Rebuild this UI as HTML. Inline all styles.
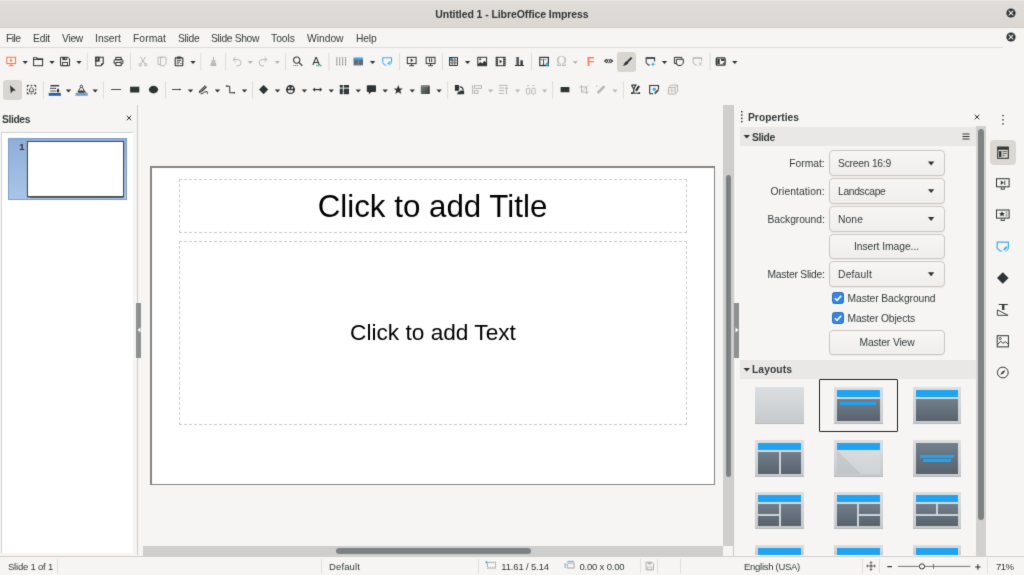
<!DOCTYPE html>
<html lang="en"><head><meta charset="utf-8"><title>Untitled 1 - LibreOffice Impress</title>
<style>
*{box-sizing:border-box;margin:0;padding:0}
html,body{width:1024px;height:575px;overflow:hidden;background:#f6f5f3}
body{position:relative;font-family:"Liberation Sans",sans-serif;font-size:10.4px;color:#353a3c;-webkit-font-smoothing:antialiased}
.a{position:absolute}
#root{position:absolute;left:0;top:0;width:1024px;height:575px;will-change:transform;background:#f6f5f3;filter:url(#soft)}
.t{position:absolute;white-space:nowrap;line-height:14px;height:14px}
.b{font-weight:bold}
#title{left:0;top:0;width:1024px;height:28px;background:linear-gradient(#ece9e6 0,#e0dcd9 1.5px,#dbd7d3 26px);border-bottom:1px solid #d0cbc6}
.sep{position:absolute;width:1px;background:#e1dfdc}
.ic{position:absolute;width:18px;height:18px;overflow:visible}
.dd{position:absolute;width:0;height:0;border-left:3.3px solid transparent;border-right:3.3px solid transparent;border-top:3.6px solid #2e3436;margin-left:-.3px}
.dd.g{border-top-color:#b9b7b4}
.combo,.btn{position:absolute;left:829px;width:116px;height:25.6px;border:1px solid #cdc7c2;border-radius:4px;background:linear-gradient(#f7f6f5,#efeeec);box-shadow:0 1px 1px rgba(0,0,0,.06)}
.lab{position:absolute;right:199px;text-align:right;white-space:nowrap;line-height:14px;height:14px}
.cb{position:absolute;left:832px;width:12px;height:12px;border-radius:2.5px;background:#3584e4;border:1px solid #2a6fc6}
.shdr{position:absolute;left:740px;width:236px;background:#e9e8e6}

.thumb{position:absolute;background:linear-gradient(#dcdfe1,#c6cacd);border-bottom:1px solid #b6babd}
.thumb .in{position:absolute;left:3px;right:3px;top:3px;bottom:3px;background:linear-gradient(#717f8d,#58626c)}
.thumb .bl{position:absolute;background:#1fa3f2}
.thumb .ln{position:absolute;background:#cdd1d4}
.thumb .bx{position:absolute;background:linear-gradient(#717f8d,#58626c)}
</style></head>
<body>
<svg width="0" height="0" style="position:absolute"><defs><filter id="soft" x="0" y="0" width="100%" height="100%" color-interpolation-filters="sRGB"><feConvolveMatrix order="3" kernelMatrix="0.011 0.084 0.011 0.084 0.62 0.084 0.011 0.084 0.011" divisor="1" edgeMode="duplicate" preserveAlpha="true"/></filter></defs></svg>
<div id="root">

<div id="title" class="a"></div>
<!-- window close buttons -->
<svg class="a" style="left:1004.6px;top:7.4px;width:12px;height:12px" viewBox="0 0 12 12"><circle cx="6" cy="6" r="4.6" fill="#2e3436"/><path d="M3.7 3.7l4.6 4.6M8.3 3.7l-4.6 4.6" stroke="#f2f0ee" stroke-width="1.1" fill="none"/></svg>
<svg class="a" style="left:1004.6px;top:31.4px;width:12px;height:12px" viewBox="0 0 12 12"><circle cx="6" cy="6" r="4.6" fill="#2e3436"/><path d="M3.7 3.7l4.6 4.6M8.3 3.7l-4.6 4.6" stroke="#f2f0ee" stroke-width="1.1" fill="none"/></svg>
<!-- menubar underline -->
<div class="a" style="left:0;top:47px;width:1003px;height:1px;background:#dfddda"></div>
<!-- pressed toolbar buttons -->
<div class="a" style="left:617.4px;top:51.6px;width:18.8px;height:20.3px;border-radius:3px;background:#d9d5d1"></div>
<div class="a" style="left:3.3px;top:80px;width:18.4px;height:20.2px;border-radius:3px;background:#d9d5d1"></div>

<!-- slide panel -->
<div class="a" style="left:1px;top:131.6px;width:132.2px;height:421px;background:#fff;border-top:1px solid #d4d2cf;border-left:1px solid #d4d2cf"></div>
<div class="a" style="left:8px;top:138px;width:119px;height:62px;background:linear-gradient(#8fadd6,#a9c5e8);border:1px solid #7f9fca"></div>
<div class="a" style="left:27px;top:141px;width:97px;height:56px;background:#fff;border:1px solid #4a4a4a;box-shadow:0 .5px 1px rgba(0,0,0,.5)"></div>
<svg class="a" style="left:124.6px;top:114.4px;width:8px;height:8px" viewBox="0 0 8 8"><path d="M1.7 1.7l4.6 4.6M6.3 1.7l-4.6 4.6" stroke="#2e3436" stroke-width="1" fill="none"/></svg>
<!-- splitter left -->
<div class="a" style="left:136.8px;top:105px;width:1.4px;height:449.5px;background:#cdcbc9"></div>
<div class="a" style="left:136.2px;top:303px;width:5px;height:54.6px;background:#8e9192"></div>
<svg class="a" style="left:137px;top:327px;width:4px;height:6px" viewBox="0 0 4 6"><path d="M3.5 0.5L0.5 3l3 2.5z" fill="#fff"/></svg>

<!-- editing view -->
<div class="a" style="left:150px;top:165.8px;width:565px;height:319.2px;background:#fff;border:1.5px solid #858585;border-top-width:2px;border-left-width:2px"></div>
<div class="a" style="left:179px;top:179.4px;width:507.6px;height:54px;border:1px dashed #cbcbcb"></div>
<div class="a" style="left:179px;top:240.6px;width:507.6px;height:184.6px;border:1px dashed #cbcbcb"></div>
<div class="a" style="left:178.5px;top:180px;width:508px;height:54px;line-height:54px;text-align:center;font-size:31.3px;color:#000;font-family:'Liberation Sans',sans-serif">Click to add Title</div>
<div class="a" style="left:179px;top:241px;width:508px;height:184px;line-height:183.4px;text-align:center;font-size:22.66px;color:#000;font-family:'Liberation Sans',sans-serif">Click to add Text</div>

<!-- h scrollbar -->
<div class="a" style="left:143px;top:546px;width:580px;height:10px;background:#cecece"></div>
<div class="a" style="left:336px;top:548px;width:195px;height:5.5px;border-radius:3px;background:#7e8282"></div>
<!-- v scrollbar -->
<div class="a" style="left:723px;top:105px;width:10.3px;height:441px;background:#cecece"></div>
<div class="a" style="left:725.5px;top:174.6px;width:5.6px;height:302.4px;border-radius:3px;background:#7e8282"></div>
<div class="a" style="left:733.2px;top:105px;width:1px;height:451px;background:#c9c9c9"></div>
<!-- sidebar splitter -->
<div class="a" style="left:734px;top:302.8px;width:5.3px;height:55px;background:#8e9192"></div>
<svg class="a" style="left:734.5px;top:327px;width:4px;height:6px" viewBox="0 0 4 6"><path d="M0.5 0.5L3.5 3l-3 2.5z" fill="#fff"/></svg>

<!-- sidebar -->
<div class="shdr" style="top:127px;height:19px"></div>
<div class="shdr" style="top:360px;height:19.3px"></div>
<svg class="a" style="left:740px;top:110px;width:4px;height:14px" viewBox="0 0 4 14"><g fill="#2e3436"><rect x="1" y="1" width="1.5" height="1.5"/><rect x="1" y="4.3" width="1.5" height="1.5"/><rect x="1" y="7.6" width="1.5" height="1.5"/><rect x="1" y="10.9" width="1.5" height="1.5"/></g></svg>
<svg class="a" style="left:972.5px;top:112.7px;width:8px;height:8px" viewBox="0 0 8 8"><path d="M1.7 1.7l4.6 4.6M6.3 1.7l-4.6 4.6" stroke="#2e3436" stroke-width="1" fill="none"/></svg>
<svg class="a" style="left:743px;top:134px;width:8px;height:6px" viewBox="0 0 8 6"><path d="M0.5 1h6.5L3.75 4.6z" fill="#2e3436"/></svg>
<svg class="a" style="left:743px;top:367px;width:8px;height:6px" viewBox="0 0 8 6"><path d="M0.5 1h6.5L3.75 4.6z" fill="#2e3436"/></svg>
<svg class="a" style="left:961px;top:132px;width:10px;height:9px" viewBox="0 0 10 9"><path d="M1.5 2h7M1.5 4.5h7M1.5 7h7" stroke="#2e3436" stroke-width="1" fill="none"/></svg>

<div class="combo" style="top:150.2px"></div>
<div class="combo" style="top:178.2px"></div>
<div class="combo" style="top:206px"></div>
<div class="btn" style="top:233.6px"></div>
<div class="combo" style="top:261.4px"></div>
<div class="btn" style="top:329.5px"></div>
<div class="cb" style="top:292.3px"></div>
<div class="cb" style="top:312.4px"></div>
<svg class="a" style="left:832px;top:292.3px;width:12px;height:12px" viewBox="0 0 12 12"><path d="M2.8 6.2l2.2 2.2 4.2-4.6" stroke="#fff" stroke-width="1.6" fill="none"/></svg>
<svg class="a" style="left:832px;top:312.4px;width:12px;height:12px" viewBox="0 0 12 12"><path d="M2.8 6.2l2.2 2.2 4.2-4.6" stroke="#fff" stroke-width="1.6" fill="none"/></svg>

<!-- layouts -->
<div class="a" style="left:818.9px;top:379.3px;width:78.8px;height:52.5px;border:1px solid #222;border-radius:1px"></div>
<div class="thumb" style="left:755.2px;top:387.2px;width:48.8px;height:37.2px;"></div>
<div class="thumb" style="left:833.9px;top:387.2px;width:48.8px;height:37.2px;"><div class="bx" style="left:3.1px;top:11.60px;width:42.599999999999994px;height:22.50px"></div><div class="bl" style="left:3.1px;top:3.1px;width:42.599999999999994px;height:6.6px"></div><div class="bl" style="left:6.2px;top:14.4px;width:36.40px;height:3.3px"></div></div>
<div class="thumb" style="left:912.6px;top:387.2px;width:48.8px;height:37.2px;"><div class="bx" style="left:3.1px;top:11.60px;width:42.599999999999994px;height:22.50px"></div><div class="bl" style="left:3.1px;top:3.1px;width:42.599999999999994px;height:6.6px"></div></div>
<div class="thumb" style="left:755.2px;top:440.3px;width:48.8px;height:37.2px;"><div class="bx" style="left:3.1px;top:11.60px;width:42.599999999999994px;height:22.50px"></div><div class="bl" style="left:3.1px;top:3.1px;width:42.599999999999994px;height:6.6px"></div><div class="ln" style="left:23.40px;top:11.60px;width:2px;height:22.50px"></div></div>
<div class="thumb" style="left:833.9px;top:440.3px;width:48.8px;height:37.2px;"><div class="bl" style="left:3.1px;top:3.1px;width:42.599999999999994px;height:6.6px"></div><div style="position:absolute;left:3.1px;top:9.7px;width:42.599999999999994px;height:24.40px;background:linear-gradient(#d9dcde,#cfd3d5)"><div style="position:absolute;left:0;top:0;width:100%;height:100%;background:linear-gradient(#c9cdd0,#c1c5c8);clip-path:polygon(0 0,24.40px 100%,0 100%)"></div></div></div>
<div class="thumb" style="left:912.6px;top:440.3px;width:48.8px;height:37.2px;"><div class="bx" style="left:3.1px;top:3.1px;width:42.599999999999994px;height:31.00px"></div><div class="bl" style="left:7px;top:14.3px;width:34.8px;height:3px"></div><div class="bl" style="left:10px;top:19.2px;width:28.8px;height:3px"></div></div>
<div class="thumb" style="left:755.2px;top:492.3px;width:48.8px;height:37.2px;"><div class="bx" style="left:3.1px;top:11.60px;width:42.599999999999994px;height:22.50px"></div><div class="bl" style="left:3.1px;top:3.1px;width:42.599999999999994px;height:6.6px"></div><div class="ln" style="left:23.40px;top:11.60px;width:2px;height:22.50px"></div><div class="ln" style="left:3.10px;top:21.85px;width:21.30px;height:1.9px"></div></div>
<div class="thumb" style="left:833.9px;top:492.3px;width:48.8px;height:37.2px;"><div class="bx" style="left:3.1px;top:11.60px;width:42.599999999999994px;height:22.50px"></div><div class="bl" style="left:3.1px;top:3.1px;width:42.599999999999994px;height:6.6px"></div><div class="ln" style="left:23.40px;top:11.60px;width:2px;height:22.50px"></div><div class="ln" style="left:24.40px;top:21.85px;width:21.30px;height:1.9px"></div></div>
<div class="thumb" style="left:912.6px;top:492.3px;width:48.8px;height:37.2px;"><div class="bx" style="left:3.1px;top:11.60px;width:42.599999999999994px;height:22.50px"></div><div class="bl" style="left:3.1px;top:3.1px;width:42.599999999999994px;height:6.6px"></div><div class="ln" style="left:23.40px;top:11.60px;width:2px;height:11.25px"></div><div class="ln" style="left:3.10px;top:21.85px;width:42.60px;height:1.9px"></div></div>
<div class="thumb" style="left:755.2px;top:545.2px;width:48.8px;height:9.6px;overflow:hidden;border-bottom:0;"><div class="bl" style="left:3.1px;top:3.1px;width:42.599999999999994px;height:6.6px"></div></div>
<div class="thumb" style="left:833.9px;top:545.2px;width:48.8px;height:9.6px;overflow:hidden;border-bottom:0;"><div class="bl" style="left:3.1px;top:3.1px;width:42.599999999999994px;height:6.6px"></div></div>
<div class="thumb" style="left:912.6px;top:545.2px;width:48.8px;height:9.6px;overflow:hidden;border-bottom:0;"><div class="bl" style="left:3.1px;top:3.1px;width:42.599999999999994px;height:6.6px"></div></div>

<!-- sidebar scrollbar -->
<div class="a" style="left:976px;top:126px;width:10.4px;height:430px;background:#d2d1cf"></div>
<div class="a" style="left:978.2px;top:129.3px;width:6px;height:391px;border-radius:3px;background:#7e8282"></div>
<!-- tabbar active -->
<div class="a" style="left:989.6px;top:140px;width:26.7px;height:25.3px;border-radius:4px;background:#dbd7d3"></div>

<!-- status bar -->
<div class="a" style="left:0;top:556px;width:1024px;height:1px;background:#d2d0cd"></div>
<div class="a" style="left:0;top:557px;width:1024px;height:18px;background:#f6f5f3"></div>
<div class="sep" style="left:57px;top:559px;height:14px"></div>
<div class="sep" style="left:321px;top:559px;height:14px"></div>
<div class="sep" style="left:478px;top:559px;height:14px"></div>
<div class="sep" style="left:640px;top:559px;height:14px"></div>
<div class="sep" style="left:657px;top:559px;height:14px"></div>
<div class="sep" style="left:680px;top:559px;height:14px"></div>
<div class="sep" style="left:862px;top:559px;height:14px"></div>
<div class="sep" style="left:879px;top:559px;height:14px"></div>
<div class="sep" style="left:987px;top:559px;height:14px"></div>
<!-- zoom slider -->
<svg class="a" style="left:884px;top:560px;width:100px;height:12px" viewBox="0 0 100 12"><path d="M3.3 6.6h4.7M91.2 7h5.4M93.9 4.3v5.4" stroke="#2e3436" stroke-width="1.1" fill="none"/><path d="M14 6.4h72.5" stroke="#555" stroke-width=".8"/><path d="M49.5 3.9v5" stroke="#555" stroke-width=".8"/><circle cx="38" cy="6.4" r="2.6" fill="#f6f5f3" stroke="#2e3436" stroke-width="1"/></svg>

<svg class="a" style="left:0;top:0;width:1024px;height:575px" viewBox="0 0 1024 575">
<g transform="translate(11.2 61.5)"><rect x="-4.4" y="-4.2" width="8.8" height="6.300000000000001" rx="0" fill="none" stroke="#f0763f" stroke-width="1.0"/><path d="M0,2.1V4M-2.4,4.2H2.4" fill="none" stroke="#f0763f" stroke-width="1.0" /><path d="M-1,-3.1L1.6,-1.2L-1,0.7Z" fill="#f0763f" /></g>
<path d="M22.5,61.1H27.9L25.2,64.1Z" fill="#2e3436"/>
<g transform="translate(38.1 61.5)"><rect x="-4.5" y="-2.4" width="9.0" height="6.6" rx="0" fill="none" stroke="#2e3436" stroke-width="1.0"/><path d="M-5,-1.4V-4.3H-1.2L0.2,-2.9H5V-1.4Z" fill="#2e3436" /><rect x="-4" y="-3.4" width="2.4" height="1.0" rx="0" fill="#f6f5f3"/></g>
<path d="M49.3,61.1H54.7L52,64.1Z" fill="#2e3436"/>
<g transform="translate(65 61.5)"><path d="M-4.5,-4.2H3L4.5,-2.7V4.2H-4.5Z" fill="none" stroke="#2e3436" stroke-width="1.0" /><rect x="-2.5" y="-4.2" width="4.8" height="2.8000000000000003" rx="0" fill="#2e3436"/><rect x="0.4" y="-3.7" width="0.9999999999999999" height="1.5" rx="0" fill="#f6f5f3"/><rect x="-2.5" y="1" width="5.0" height="3.2" rx="0" fill="none" stroke="#2e3436" stroke-width="0.9"/></g>
<path d="M76.3,61.1H81.7L79,64.1Z" fill="#2e3436"/>
<rect x="86.8" y="52.7" width="1" height="17.7" fill="#dedcd9"/>
<g transform="translate(99.5 61.5)"><path d="M-3.7,-4.2H3.7V2L1.5,4.2H-3.7Z" fill="none" stroke="#2e3436" stroke-width="1.1" /><rect x="-4.2" y="-4.7" width="4.4" height="4.8" rx="0" fill="#2e3436"/><path d="M3.9,2H1.5V4.4Z" fill="#2e3436" /><rect x="-2.7" y="-3.6" width="0.9000000000000001" height="2.2" rx="0" fill="#f6f5f3"/></g>
<g transform="translate(118.5 61.5)"><rect x="-4.4" y="-1.8" width="8.8" height="4.2" rx="0.8" fill="none" stroke="#2e3436" stroke-width="1.0"/><rect x="-2.6" y="-4.1" width="5.2" height="2.3" rx="0" fill="none" stroke="#2e3436" stroke-width="1.0"/><rect x="-2.6" y="0.9" width="5.2" height="3.1999999999999997" rx="0" fill="#f6f5f3" stroke="#2e3436" stroke-width="1.0"/><rect x="2.3" y="-0.9" width="1.0" height="0.8" rx="0" fill="#2e3436"/></g>
<rect x="130.0" y="52.7" width="1" height="17.7" fill="#dedcd9"/>
<g transform="translate(143 61.5)"><path d="M-2.6,-4.6L2,2.4M2.6,-4.6L-2,2.4" fill="none" stroke="#b9b7b4" stroke-width="1" /><circle cx="-2.8" cy="3.3" r="1.25" fill="none" stroke="#b9b7b4"/><circle cx="2.8" cy="3.3" r="1.25" fill="none" stroke="#b9b7b4"/></g>
<g transform="translate(162 61.5)"><path d="M-1.6,3H-4V-4.3H1.4" fill="none" stroke="#b9b7b4" stroke-width="1" /><path d="M-1.4,-4.3H4V2.3L2,4.3H-1.4Z" fill="none" stroke="#b9b7b4" stroke-width="1" /></g>
<g transform="translate(179 61.5)"><rect x="-3.8" y="-3.6" width="7.6" height="7.800000000000001" rx="0.5" fill="none" stroke="#2e3436" stroke-width="1.1"/><rect x="-2" y="-4.9" width="4" height="1.9000000000000004" rx="0.5" fill="#2e3436"/><path d="M-2.2,-1.2H2.2M-2.2,0.6H0.8M-2.2,2.3H-0.4" fill="none" stroke="#2e3436" stroke-width="0.9" /><path d="M2.4,1V2.6H0.8Z" fill="#2e3436" /></g>
<path d="M190.3,61.1H195.7L193,64.1Z" fill="#2e3436"/>
<rect x="200.3" y="52.7" width="1" height="17.7" fill="#dedcd9"/>
<g transform="translate(213.5 61.5)"><path d="M0,-4.6V-1" fill="none" stroke="#b9b7b4" stroke-width="1.1" /><path d="M-1.9,-1.2H1.9V0.4H-1.9Z M-2.1,0.8H2.1L2.9,4.5H-3.4Z" fill="#b9b7b4" /></g>
<rect x="225.1" y="52.7" width="1" height="17.7" fill="#dedcd9"/>
<g transform="translate(237 61.5)"><path d="M-3.6,-1.9H0.9A3.15,3.15 0 0 1 0.9,4.4H-0.8" fill="none" stroke="#b9b7b4" stroke-width="1" /><path d="M-1.3,-4.4L-3.9,-1.9L-1.3,0.6" fill="none" stroke="#b9b7b4" stroke-width="1" /></g>
<path d="M247.60000000000002,61.1H253.0L250.3,64.1Z" fill="#b9b7b4"/>
<g transform="translate(263.2 61.5)"><path d="M3.6,-1.9H-0.9A3.15,3.15 0 0 0 -0.9,4.4H0.8" fill="none" stroke="#b9b7b4" stroke-width="1" /><path d="M1.3,-4.4L3.9,-1.9L1.3,0.6" fill="none" stroke="#b9b7b4" stroke-width="1" /></g>
<path d="M274.6,61.1H280.0L277.3,64.1Z" fill="#b9b7b4"/>
<rect x="285.1" y="52.7" width="1" height="17.7" fill="#dedcd9"/>
<g transform="translate(297.7 61.5)"><circle cx="-1" cy="-1.4" r="3.1" fill="none" stroke="#2e3436" stroke-width="1.1"/><path d="M1.2,0.9L4.6,4.2" fill="none" stroke="#2e3436" stroke-width="1.2" /><path d="M-4.6,4H1" fill="none" stroke="#f0653a" stroke-width="1" stroke-dasharray="1.3 0.6"/></g>
<g transform="translate(316.6 61.5)"><text x="-0.6" y="3.6" font-family="Liberation Sans, sans-serif" font-size="11.5" font-weight="normal" fill="#2e3436" text-anchor="middle">A</text><path d="M-0.4,4H5.4" fill="none" stroke="#3cb371" stroke-width="1.4" stroke-dasharray="1.3 0.5"/></g>
<rect x="328.5" y="52.7" width="1" height="17.7" fill="#dedcd9"/>
<g transform="translate(341.2 61.5)"><path d="M-4.4,-4.4V4.4M-1.5,-4.4V4.4M1.5,-4.4V4.4M4.4,-4.4V4.4" fill="none" stroke="#6d7173" stroke-width="0.9" stroke-dasharray="1.6 0.5"/></g>
<g transform="translate(358.3 61.5)"><rect x="-4.7" y="-3.8" width="9.4" height="7.6" rx="0" fill="#5d6a78"/><rect x="-4.7" y="-3.8" width="9.4" height="1.9999999999999998" rx="0" fill="#3daee9"/><rect x="-0.4" y="-1.8" width="0.8" height="5.6" rx="0" fill="#8794a0"/><path d="M-4.7,3.7H4.7" fill="none" stroke="#9aa4ad" stroke-width="0.6" /></g>
<path d="M369.90000000000003,61.1H375.3L372.6,64.1Z" fill="#2e3436"/>
<g transform="translate(387.1 61.5)"><path d="M-4.4,0.8V-3.7H4.4V0.8" fill="none" stroke="#3daee9" stroke-width="1.1" /><path d="M-4.9,0.6V1.6L-2.4,4.1H-0.6V3.3H-1.6Z M4.9,0.6V1.6L2.4,4.1H1.6Z" fill="#3daee9" /><path d="M0.6,2.8L3.2,0.2" fill="none" stroke="#3daee9" stroke-width="1.6" /></g>
<rect x="399.0" y="52.7" width="1" height="17.7" fill="#dedcd9"/>
<g transform="translate(411.7 61.5)"><rect x="-4.4" y="-4.2" width="8.8" height="6.300000000000001" rx="0" fill="none" stroke="#2e3436" stroke-width="1.0"/><path d="M0,2.1V4M-2.4,4.2H2.4" fill="none" stroke="#2e3436" stroke-width="1.0" /><path d="M-1,-3.1L1.6,-1.2L-1,0.7Z" fill="#2e3436" /></g>
<g transform="translate(430.6 61.5)"><rect x="-4.4" y="-4.2" width="8.8" height="6.300000000000001" rx="0" fill="none" stroke="#2e3436" stroke-width="1.0"/><path d="M0,2.1V4M-2.4,4.2H2.4" fill="none" stroke="#2e3436" stroke-width="1.0" /><path d="M-1.1,-3.1V0.7M1.1,-3.1V0.7" fill="none" stroke="#2e3436" stroke-width="1" /></g>
<rect x="441.9" y="52.7" width="1" height="17.7" fill="#dedcd9"/>
<g transform="translate(453.5 61.5)"><rect x="-4" y="-4" width="2.67" height="2.67" rx="0" fill="#3daee9"/><rect x="-4" y="-4" width="8" height="8" rx="0" fill="none" stroke="#2e3436" stroke-width="0.95"/><path d="M-1.33,-4V4M1.33,-4V4M-4,-1.33H4M-4,1.33H4" fill="none" stroke="#2e3436" stroke-width="0.75" /></g>
<path d="M464.90000000000003,61.1H470.3L467.6,64.1Z" fill="#2e3436"/>
<g transform="translate(482.2 61.5)"><rect x="-4.4" y="-4.2" width="8.8" height="8.4" rx="0" fill="none" stroke="#2e3436" stroke-width="1.0"/><path d="M-4.2,4V2.6L-1.8,0.4L0,2L2.2,-0.8L4.2,1.4V4Z" fill="#2e3436" /><circle cx="-2" cy="-2.2" r="0.95" fill="#2e3436"/></g>
<g transform="translate(500.6 61.5)"><rect x="-4.4" y="-4.2" width="8.8" height="8.4" rx="0" fill="none" stroke="#2e3436" stroke-width="1.0"/><rect x="-4.6" y="-4.4" width="1.9999999999999996" height="8.8" rx="0" fill="#2e3436"/><rect x="2.6" y="-4.4" width="1.9999999999999996" height="8.8" rx="0" fill="#2e3436"/><path d="M-1,-2L1.6,0L-1,2Z" fill="#2e3436" /><path d="M-3.6,-3.6V3.8M3.6,-3.6V3.8" fill="none" stroke="#f6f5f3" stroke-width="0.7" stroke-dasharray="0.9 1.1"/></g>
<g transform="translate(519.5 61.5)"><defs><linearGradient id="cg" x1="0" x2="1"><stop offset="0" stop-color="#9a9d9e"/><stop offset="1" stop-color="#2e3436"/></linearGradient></defs><rect x="-3.6" y="-4.5" width="3.0" height="8.1" rx="0" fill="url(#cg)"/><rect x="0.9" y="-1.2" width="2.4" height="4.8" rx="0" fill="#2e3436"/><path d="M-4.6,4H4.5" fill="none" stroke="#2e3436" stroke-width="1" /></g>
<rect x="531.0" y="52.7" width="1" height="17.7" fill="#dedcd9"/>
<g transform="translate(544.1 61.5)"><rect x="-4.3" y="-4.1" width="8.6" height="8.2" rx="0" fill="none" stroke="#2e3436" stroke-width="1.2"/><text x="-0.6" y="3.1" font-family="Liberation Serif, sans-serif" font-size="9" font-weight="normal" fill="#2e3436" text-anchor="middle">T</text><path d="M3,0.6L5,2.8L3,5L1,2.8Z" fill="#3daee9" /></g>
<g transform="translate(561.5 61.5)"><text x="0" y="4.5" font-family="Liberation Serif, sans-serif" font-size="14" font-weight="normal" fill="#b9b7b4" text-anchor="middle">Ω</text></g>
<path d="M572.5999999999999,61.1H578.0L575.3,64.1Z" fill="#b9b7b4"/>
<g transform="translate(590.4 61.5)"><text x="0.2" y="4.5" font-family="Liberation Sans, sans-serif" font-size="12.5" font-weight="bold" fill="#f4815e" text-anchor="middle">F</text></g>
<g transform="translate(608.6 61.5)"><path d="M-1.6,-2.2L-3.9,-0.4L-1.6,1.4M1.6,-2.2L3.9,-0.4L1.6,1.4" fill="none" stroke="#2e3436" stroke-width="1.2" /><ellipse cx="0" cy="-0.4" rx="1.3" ry="1.5" fill="none" stroke="#2e3436" stroke-width="1"/></g>
<g transform="translate(627.4 61.5)"><path d="M4.2,-3.9L-0.8,1.4" fill="none" stroke="#2e3436" stroke-width="2" /><path d="M-0.3,0.2L1,1.6C-0.5,3.5 -2.5,4.4 -4.7,4.3C-3.6,3.4 -3.4,2.4 -2.6,1.2C-2,0.3 -1,-0.1 -0.3,0.2Z" fill="#2e3436" /></g>
<g transform="translate(650.4 61.5)"><path d="M-4.2,1V-3.5H4.2V0" fill="none" stroke="#2e3436" stroke-width="1.0" /><path d="M-4.7,-3.5H4.7" fill="none" stroke="#2e3436" stroke-width="1.4" /><path d="M-4.7,0.4V1.4L-2.2,3.9H-0.6V3.1H-1.6Z" fill="#2e3436" /><path d="M2.6,0.4L3.3,2L5,2.7L3.3,3.4L2.6,5L1.9,3.4L0.2,2.7L1.9,2Z" fill="#3daee9" /></g>
<path d="M661.8,61.1H667.2L664.5,64.1Z" fill="#2e3436"/>
<g transform="translate(678.8 61.5)"><path d="M-2.6,2H-4.4V-4.1H3V-2.6" fill="none" stroke="#2e3436" stroke-width="1.0" /><path d="M-2.4,-2.2H4.5V1.6L2.4,4H-0.8L-2.4,2.4Z" fill="none" stroke="#2e3436" stroke-width="1.0" /><path d="M-2.5,1.4L0,4.2H-0.8L-2.5,2.4Z" fill="#2e3436" /></g>
<g transform="translate(697.4 61.5)"><path d="M-4.2,1V-3.5H4.2V-0.2" fill="none" stroke="#b9b7b4" stroke-width="1.0" /><path d="M-4.7,-3.5H4.7" fill="none" stroke="#b9b7b4" stroke-width="1.2" /><path d="M-4.7,0.4V1.4L-2.2,3.9H-0.6V3.1H-1.6Z" fill="#b9b7b4" /><path d="M1.4,0.8L4.6,4.2M4.6,0.8L1.4,4.2" fill="none" stroke="#b9b7b4" stroke-width="0.9" /></g>
<rect x="709.5" y="52.7" width="1" height="17.7" fill="#dedcd9"/>
<g transform="translate(720.7 61.5)"><rect x="-4.4" y="-3.7" width="8.8" height="7.4" rx="0.9" fill="none" stroke="#2e3436" stroke-width="1.3"/><rect x="-3.4" y="-2.6" width="2.4" height="5.2" rx="0" fill="#2e3436"/><rect x="0.4" y="-2.6" width="3.2" height="2.0" rx="0" fill="#2e3436"/><path d="M3.6,0.6V2.8H1.4Z" fill="#2e3436" /></g>
<path d="M732.0999999999999,61.1H737.5L734.8,64.1Z" fill="#2e3436"/>
<g transform="translate(12.6 89.6)"><path d="M-2.5,-4.3L3.2,0.9L0.3,1.1L-1.8,4Z" fill="#2e3436" /></g>
<g transform="translate(31.5 89.6)"><path d="M-4.2,-2.4V-4.2H-2.4M2.4,-4.2H4.2V-2.4M4.2,2.4V4.2H2.4M-2.4,4.2H-4.2V2.4" fill="none" stroke="#2e3436" stroke-width="1.0" /><path d="M-0.9,-4.2H0.9M-0.9,4.2H0.9M-4.2,-0.9V0.9M4.2,-0.9V0.9" fill="none" stroke="#2e3436" stroke-width="1.0" /><path d="M-1.9,-0.6V2.2H1.9V-0.6L0,-2.4Z" fill="none" stroke="#2e3436" stroke-width="0.9" /></g>
<rect x="42.9" y="81.1" width="1" height="17.7" fill="#dedcd9"/>
<g transform="translate(54.8 89.6)"><rect x="-5" y="-5" width="10" height="8.3" rx="0" fill="#fcfcfb"/><rect x="-6.1" y="3.3" width="12.2" height="2.9000000000000004" rx="0" fill="#2a5ca8"/><path d="M-4.4,-3.9H4.4" fill="none" stroke="#2e3436" stroke-width="1.4" /><path d="M-4.6,-1.2H1.4" fill="none" stroke="#2e3436" stroke-width="1.2" stroke-dasharray="1.6 0.5"/><path d="M-4.6,1.4H1" fill="none" stroke="#2e3436" stroke-width="0.9" /><path d="M3.2,-1.6C4.2,0 4.6,0.8 4.6,1.5A1.4,1.4 0 0 1 1.8,1.5C1.8,0.8 2.2,0 3.2,-1.6Z" fill="#2e3436" /></g>
<path d="M65.8,89.6H71.2L68.5,92.6Z" fill="#2e3436"/>
<g transform="translate(81.6 89.6)"><rect x="-6.1" y="3.3" width="12.2" height="2.9000000000000004" rx="0" fill="#729fcf"/><circle cx="-0.2" cy="-3.2" r="1.2" fill="none" stroke="#2e3436" stroke-width="0.9"/><path d="M-1.1,-2.2L-3.6,2.2M0.7,-2.2L3.2,2.2" fill="none" stroke="#2e3436" stroke-width="0.9" /><path d="M-3.9,2.6C-3.4,-0.2 3,-0.2 3.5,2.6C2.6,3.3 -3,3.3 -3.9,2.6Z" fill="#2e3436" /><path d="M-2,1.1C-1,0.5 0.6,0.5 1.6,1.1" fill="none" stroke="#f6f5f3" stroke-width="0.6" /><path d="M3.6,1.6L5,2.9H3.4Z" fill="#2e3436" /></g>
<path d="M92.5,89.6H97.9L95.2,92.6Z" fill="#2e3436"/>
<rect x="102.9" y="81.1" width="1" height="17.7" fill="#dedcd9"/>
<g transform="translate(116.1 89.6)"><path d="M-4.9,-0.1H4.9" fill="none" stroke="#2e3436" stroke-width="0.9" /></g>
<g transform="translate(134.7 89.6)"><rect x="-4.6" y="-2.9" width="9.2" height="5.8" rx="0" fill="#2e3436"/></g>
<g transform="translate(153.5 89.6)"><ellipse cx="0" cy="0" rx="4.6" ry="3.8" fill="#2e3436"/></g>
<rect x="165.0" y="81.1" width="1" height="17.7" fill="#dedcd9"/>
<g transform="translate(176.6 89.6)"><path d="M-4.6,-0.1H3.4" fill="none" stroke="#2e3436" stroke-width="0.9" /><path d="M2.6,-1.1L4.8,-0.1L2.6,0.9Z" fill="#2e3436" /></g>
<path d="M187.8,89.6H193.2L190.5,92.6Z" fill="#2e3436"/>
<g transform="translate(203.6 89.6)"><path d="M2.4,-3.4L-2.8,1.6" fill="none" stroke="#2e3436" stroke-width="2.6" /><path d="M2.2,-3.4L-3,1.6" fill="none" stroke="#f6f5f3" stroke-width="0.6" /><path d="M-4.3,0.6L-2.2,2.7L-4.8,3.4Z" fill="#2e3436" /><path d="M-3,4.3C-1,4.4 1,2 2.4,1.9C3.8,1.8 4.6,2.8 3.4,4.3" fill="none" stroke="#2e3436" stroke-width="1" /></g>
<path d="M214.8,89.6H220.2L217.5,92.6Z" fill="#2e3436"/>
<g transform="translate(230.5 89.6)"><path d="M-3.4,-3.4H-0.8V3.2H3.4" fill="none" stroke="#2e3436" stroke-width="1.0" /><rect x="-4.6" y="-4.4" width="1.5999999999999996" height="1.6000000000000005" rx="0.5" fill="#2e3436"/><rect x="3" y="2.4" width="1.5999999999999996" height="1.6" rx="0.5" fill="#2e3436"/></g>
<path d="M241.8,89.6H247.2L244.5,92.6Z" fill="#2e3436"/>
<rect x="252.0" y="81.1" width="1" height="17.7" fill="#dedcd9"/>
<g transform="translate(263.6 89.6)"><path d="M0,-4.6L4.6,0L0,4.6L-4.6,0Z" fill="#2e3436" /></g>
<path d="M274.8,89.6H280.2L277.5,92.6Z" fill="#2e3436"/>
<g transform="translate(290.5 89.6)"><circle cx="0" cy="0" r="4.5" fill="#2e3436"/><path d="M-2.7,0.6H2.7A2.7,2.6 0 0 1 -2.7,0.6Z" fill="#f6f5f3" /><circle cx="-1.7" cy="-1.6" r="0.95" fill="#f6f5f3"/><circle cx="1.7" cy="-1.6" r="0.95" fill="#f6f5f3"/></g>
<path d="M301.7,89.6H307.09999999999997L304.4,92.6Z" fill="#2e3436"/>
<g transform="translate(317.4 89.6)"><path d="M-3.2,0H3.2" fill="none" stroke="#2e3436" stroke-width="1.3" /><path d="M-2.4,-2.2L-4.8,0L-2.4,2.2Z M2.4,-2.2L4.8,0L2.4,2.2Z" fill="#2e3436" /></g>
<path d="M328.6,89.6H334.0L331.3,92.6Z" fill="#2e3436"/>
<g transform="translate(344.4 89.6)"><rect x="-4.6" y="-4.6" width="2.9999999999999996" height="2.5999999999999996" rx="0" fill="#2e3436"/><rect x="-4.6" y="-1" width="2.9999999999999996" height="5.6" rx="0" fill="#2e3436"/><rect x="-0.6" y="-4.6" width="5.199999999999999" height="2.5999999999999996" rx="0" fill="#2e3436"/><rect x="-0.6" y="-1" width="5.199999999999999" height="5.6" rx="0" fill="#2e3436"/><path d="M-4.6,1.8H4.6" fill="none" stroke="#4a5052" stroke-width="0.5" /></g>
<path d="M355.6,89.6H361.0L358.3,92.6Z" fill="#2e3436"/>
<g transform="translate(371.4 89.6)"><rect x="-4.6" y="-4.3" width="9.2" height="6.699999999999999" rx="0.7" fill="#2e3436"/><path d="M-2.8,2.2L-2.2,4.6L0,2.2Z" fill="#2e3436" /></g>
<path d="M382.5,89.6H387.9L385.2,92.6Z" fill="#2e3436"/>
<g transform="translate(398.3 89.6)"><path d="M0,-4.5L1.3,-1.2L4.6,-1.1L2,1L3,4.4L0,2.4L-3,4.4L-2,1L-4.6,-1.1L-1.3,-1.2Z" fill="#2e3436" /></g>
<path d="M409.6,89.6H415.0L412.3,92.6Z" fill="#2e3436"/>
<g transform="translate(425.3 89.6)"><defs><linearGradient id="cb" x1="0" x2="1" y1="0" y2="1"><stop offset="0" stop-color="#7c7e7e"/><stop offset="1" stop-color="#3c3f40"/></linearGradient></defs><rect x="-4.5" y="-4.4" width="9.0" height="8.8" rx="0.7" fill="url(#cb)"/><path d="M-3.2,-3.2H4.3" fill="none" stroke="#8e9090" stroke-width="0.7" /><path d="M3.3,-3V4.2" fill="none" stroke="#3a3d3e" stroke-width="0.9" /></g>
<path d="M436.40000000000003,89.6H441.8L439.1,92.6Z" fill="#2e3436"/>
<rect x="447.1" y="81.1" width="1" height="17.7" fill="#dedcd9"/>
<g transform="translate(459.5 89.6)"><rect x="-4.6" y="-4.6" width="4.199999999999999" height="5.8" rx="0" fill="#2e3436"/><rect x="0.2" y="1" width="4.3999999999999995" height="3.5999999999999996" rx="0" fill="#2e3436"/><path d="M0.2,-2.8C2.6,-2.8 3.6,-1.4 3.6,1" fill="none" stroke="#2e3436" stroke-width="1.2" /><path d="M-1.4,2.2H1V4.6H-2.6Z" fill="#2e3436" /></g>
<g transform="translate(477 89.6)"><path d="M-4.4,-4.6V4.6" fill="none" stroke="#b9b7b4" stroke-width="1" /><rect x="-2.6" y="-3.9" width="7.1" height="2.7" rx="0" fill="none" stroke="#b9b7b4" stroke-width="1"/><rect x="-2.6" y="1" width="3.6" height="2.8" rx="0" fill="none" stroke="#b9b7b4" stroke-width="1"/></g>
<path d="M487.90000000000003,89.6H493.3L490.6,92.6Z" fill="#b9b7b4"/>
<g transform="translate(503.5 89.6)"><path d="M-4.6,-4.3H4.6M-4.6,-1.6H0.6M-4.6,1H0.6M-4.6,3.8H0.6" fill="none" stroke="#b9b7b4" stroke-width="1" /><path d="M3,-2.4V4.6M1.4,-0.8L3,-2.6L4.6,-0.8" fill="none" stroke="#b9b7b4" stroke-width="1" /></g>
<path d="M514.9,89.6H520.3000000000001L517.6,92.6Z" fill="#b9b7b4"/>
<g transform="translate(530.8 89.6)"><rect x="-4.4" y="-1.2" width="3.4000000000000004" height="5.6000000000000005" rx="0.8" fill="none" stroke="#b9b7b4" stroke-width="1"/><rect x="1" y="-1.2" width="3.4000000000000004" height="5.6000000000000005" rx="0.8" fill="none" stroke="#b9b7b4" stroke-width="1"/><path d="M-3.6,-3.4L-2.6,-4.6L-1.6,-3.4M1.6,-3.4L2.6,-4.6L3.6,-3.4" fill="none" stroke="#b9b7b4" stroke-width="0.9" /></g>
<path d="M541.9,89.6H547.3000000000001L544.6,92.6Z" fill="#b9b7b4"/>
<rect x="552.1" y="81.1" width="1" height="17.7" fill="#dedcd9"/>
<g transform="translate(565 89.6)"><rect x="-4.4" y="-2.7" width="8.8" height="5.4" rx="0.6" fill="#2e3436"/></g>
<g transform="translate(584 89.6)"><path d="M-2.6,-4.6V2.6H4.6M-4.6,-2.6H2.6V4.6" fill="none" stroke="#b9b7b4" stroke-width="1" /><path d="M-2.4,2.4L4,-4" fill="none" stroke="#b9b7b4" stroke-width="0.8" /></g>
<g transform="translate(601.1 89.6)"><path d="M3.4,-3.4L-3.4,3.4" fill="none" stroke="#b9b7b4" stroke-width="2.6" /><path d="M-4.4,-4V-2.6M-5,-3.3H-3.8" fill="none" stroke="#b9b7b4" stroke-width="0.7" /></g>
<path d="M612.3,89.6H617.7L615,92.6Z" fill="#b9b7b4"/>
<rect x="622.9" y="81.1" width="1" height="17.7" fill="#dedcd9"/>
<g transform="translate(635.5 89.6)"><path d="M-4,-4.4H0.4L-1.8,-0.6L-1.8,3.4M-4,-4.4L-1.8,-0.6" fill="none" stroke="#2e3436" stroke-width="1.2" /><path d="M3.6,-3.6L0.4,1.2" fill="none" stroke="#2e3436" stroke-width="2.2" /><path d="M-3.4,3.6H3.8" fill="none" stroke="#2e3436" stroke-width="1" /><rect x="-4.4" y="2.6" width="1.8000000000000003" height="1.8000000000000003" rx="0" fill="#2e3436"/><rect x="3" y="2.6" width="1.5999999999999996" height="1.8000000000000003" rx="0" fill="#2e3436"/></g>
<g transform="translate(654.1 89.6)"><path d="M-4.4,4.1V-4.1H4.4V0" fill="none" stroke="#2e3436" stroke-width="1.1" /><path d="M-4.4,4.1H-1" fill="none" stroke="#2e3436" stroke-width="1.1" /><circle cx="0.2" cy="-0.4" r="1.7" fill="#3daee9"/><path d="M4.2,0.4L0.6,4" fill="none" stroke="#4d5254" stroke-width="2" /></g>
<g transform="translate(673 89.6)"><path d="M-4.6,-2H2.2V4.5H-4.6ZM-4.6,-2L-2,-4.5H4.6L2.2,-2M4.6,-4.5V2L2.2,4.5" fill="none" stroke="#b9b7b4" stroke-width="1" /><path d="M-1.2,-2V4.5M-4.6,1.2H2.2" fill="none" stroke="#b9b7b4" stroke-width="0.7" /></g>
<g transform="translate(1003 152.7)"><rect x="-5.3" y="-5.6" width="10.6" height="11.2" rx="0" fill="none" stroke="#2e3436" stroke-width="1.1"/><rect x="-5.3" y="-5.6" width="10.6" height="2.5999999999999996" rx="0" fill="#2e3436"/><rect x="-4" y="-1.6" width="2.4" height="5.800000000000001" rx="0" fill="#2e3436"/><path d="M-0.4,-1.2H3.8M-0.4,0.8H3.8M-0.4,2.8H1.6" fill="none" stroke="#5a5f61" stroke-width="0.9" /></g>
<g transform="translate(1002.8 184.2)"><rect x="-6.3" y="-5.5" width="12.6" height="8.1" rx="0" fill="none" stroke="#2e3436" stroke-width="1"/><path d="M-1.2,2.8L-1.8,5H1.8L1.2,2.8" fill="none" stroke="#2e3436" stroke-width="0.9" /><path d="M-2,-3.6L1,-1.4L-2,0.8Z" fill="#2e3436" /><path d="M2,-3.6V0.8" fill="none" stroke="#2e3436" stroke-width="0.9" /></g>
<g transform="translate(1002.8 215.5)"><rect x="-6.3" y="-5.5" width="12.6" height="8.1" rx="0" fill="none" stroke="#2e3436" stroke-width="1"/><path d="M-1.2,2.8L-1.8,5H1.8L1.2,2.8" fill="none" stroke="#2e3436" stroke-width="0.9" /><path d="M-0.8,-4.2L0.1,-2.4L2.1,-2.3L0.6,-1L1.1,0.9L-0.8,-0.2L-2.7,0.9L-2.2,-1L-3.7,-2.3L-1.7,-2.4Z" fill="#2e3436" /><path d="M2.6,-3.4H4.6M3,-1.4H4.6M2.6,0.4H4.6" fill="none" stroke="#2e3436" stroke-width="0.7" /></g>
<g transform="translate(1002.8 246.3)"><path d="M-5.6,1.4V-4.2H5.6V1.4" fill="none" stroke="#3daee9" stroke-width="1.2" /><path d="M-6.2,0.8V2.2L-3,5.2H-0.6V4.2H-2.2Z M6.2,0.8V2.2L3.2,5.2H2.2Z" fill="#3daee9" /><path d="M1,3.6L4.2,0.4" fill="none" stroke="#3daee9" stroke-width="1.9" /></g>
<g transform="translate(1002.8 278)"><path d="M0,-5.8L5.8,0L0,5.8L-5.8,0Z" fill="#2e3436" /></g>
<g transform="translate(1002.8 309.6)"><g transform="translate(0.3 0) scale(1.65 1)"><text x="0" y="0.6" font-family="Liberation Sans, sans-serif" font-size="9.4" font-weight="bold" fill="#2e3436" text-anchor="middle">T</text></g><path d="M-5.4,5.7H5.2L-5.4,0.3Z" fill="none" stroke="#2e3436" stroke-width="0.9" /></g>
<g transform="translate(1002.8 341.3)"><rect x="-5.6" y="-5.6" width="11.2" height="11.2" rx="0" fill="none" stroke="#2e3436" stroke-width="1"/><path d="M-5.2,3.4L-2,-0.2L0,2L2.6,0.4L5.2,2.6" fill="none" stroke="#2e3436" stroke-width="0.9" /><circle cx="-2.6" cy="-2.8" r="1.1" fill="none" stroke="#2e3436" stroke-width="0.8"/></g>
<g transform="translate(1002.8 372.5)"><circle cx="0" cy="0" r="5.4" fill="none" stroke="#2e3436" stroke-width="1"/><path d="M2.6,-2.6L0.8,0.8L-2.6,2.6L-0.8,-0.8Z" fill="#2e3436" /></g>
<g transform="translate(491 564.8)"><rect x="-3.6" y="-2.4" width="8.2" height="5.6" rx="0" fill="none" stroke="#8a8d8e" stroke-width="0.9"/><path d="M-3.6,-2.4H4.6V3.2H-3.6Z" fill="none" stroke="#f6f5f3" stroke-width="1" stroke-dasharray="0.8 1.4"/><path d="M-4.6,-3.8V-1.2M-5.6,-2.6H-3.2" fill="none" stroke="#3daee9" stroke-width="0.9" /></g>
<g transform="translate(569.5 564.8)"><rect x="-2.2" y="-1.6" width="6.8" height="4.800000000000001" rx="0" fill="none" stroke="#8a8d8e" stroke-width="0.9"/><path d="M-2.2,-1.6H4.6V3.2H-2.2Z" fill="none" stroke="#f6f5f3" stroke-width="1" stroke-dasharray="0.8 1.4"/><path d="M-2.2,-3.4H4.6M-4.4,-1.6V3.2" fill="none" stroke="#3daee9" stroke-width="0.9" /></g>
<g transform="translate(649.7 566)"><path d="M-3.6,-3.8H2.4L3.8,-2.4V3.8H-3.6Z" fill="none" stroke="#b4b2af" stroke-width="1" /><rect x="-2" y="-3.8" width="3.6" height="2.1999999999999997" rx="0" fill="#b4b2af"/><rect x="-2" y="1" width="4.2" height="2.8" rx="0" fill="none" stroke="#b4b2af" stroke-width="0.8"/></g>
<g transform="translate(871 566)"><path d="M-1.3,-3L0,-4.4L1.3,-3M-1.3,3L0,4.4L1.3,3M-3,-1.3L-4.4,0L-3,1.3M3,-1.3L4.4,0L3,1.3" fill="none" stroke="#2e3436" stroke-width="0.8" /><path d="M0,-4V-1.6M0,1.6V4M-4,0H-1.6M1.6,0H4" fill="none" stroke="#2e3436" stroke-width="0.7" /><rect x="-0.9" y="-0.9" width="1.8" height="1.8" rx="0" fill="none" stroke="#2e3436" stroke-width="0.7"/></g>
<path d="M927.9,161.6H934.3L931.1,165.5Z" fill="#2e3436"/>
<path d="M927.9,189.2H934.3L931.1,193.1Z" fill="#2e3436"/>
<path d="M927.9,217.0H934.3L931.1,220.9Z" fill="#2e3436"/>
<path d="M927.9,272.3H934.3L931.1,276.2Z" fill="#2e3436"/>
<rect x="1002.3" y="114.89999999999999" width="1.4" height="1.4" fill="#2e3436"/>
<rect x="1002.3" y="119.1" width="1.4" height="1.4" fill="#2e3436"/>
<rect x="1002.3" y="123.2" width="1.4" height="1.4" fill="#2e3436"/>
</svg>
<div class="t b" style="left:435.3px;top:6.61px;font-size:10.5px;letter-spacing:-0.078px;color:#2e3436;">Untitled 1 - LibreOffice Impress</div>
<div class="t" style="left:6px;top:31.68px;font-size:10.3px;letter-spacing:-0.523px;">File</div>
<div class="t" style="left:33px;top:31.68px;font-size:10.3px;letter-spacing:-0.188px;">Edit</div>
<div class="t" style="left:62px;top:31.68px;font-size:10.3px;letter-spacing:-0.285px;">View</div>
<div class="t" style="left:95px;top:31.68px;font-size:10.3px;letter-spacing:0.039px;">Insert</div>
<div class="t" style="left:133px;top:31.68px;font-size:10.3px;letter-spacing:0.062px;">Format</div>
<div class="t" style="left:178px;top:31.68px;font-size:10.3px;letter-spacing:-0.281px;">Slide</div>
<div class="t" style="left:211px;top:31.68px;font-size:10.3px;letter-spacing:-0.352px;">Slide Show</div>
<div class="t" style="left:271px;top:31.68px;font-size:10.3px;letter-spacing:-0.009px;">Tools</div>
<div class="t" style="left:307px;top:31.68px;font-size:10.3px;letter-spacing:-0.021px;">Window</div>
<div class="t" style="left:356px;top:31.68px;font-size:10.3px;letter-spacing:-0.172px;">Help</div>
<div class="t b" style="left:2px;top:112.68px;font-size:10.3px;letter-spacing:-0.391px;">Slides</div>
<div class="t b" style="left:19.3px;top:140.03px;font-size:9.3px;letter-spacing:-0.772px;color:#2e3436;">1</div>
<div class="t b" style="left:748px;top:110.68px;font-size:10.3px;letter-spacing:0.006px;">Properties</div>
<div class="t b" style="left:752px;top:130.68px;font-size:10.3px;letter-spacing:-0.322px;">Slide</div>
<div class="t b" style="left:752px;top:362.68px;font-size:10.3px;letter-spacing:0.074px;">Layouts</div>
<div class="t" style="left:838px;top:156.68px;font-size:10.3px;letter-spacing:-0.230px;">Screen 16:9</div>
<div class="t" style="left:838px;top:184.68px;font-size:10.3px;letter-spacing:-0.321px;">Landscape</div>
<div class="t" style="left:838px;top:212.68px;font-size:10.3px;letter-spacing:0.094px;">None</div>
<div class="t" style="left:854px;top:239.68px;font-size:10.3px;letter-spacing:-0.055px;">Insert Image...</div>
<div class="t" style="left:838px;top:267.68px;font-size:10.3px;letter-spacing:0.194px;">Default</div>
<div class="t" style="left:847.5px;top:291.68px;font-size:10.3px;letter-spacing:-0.076px;">Master Background</div>
<div class="t" style="left:847.5px;top:311.68px;font-size:10.3px;letter-spacing:-0.125px;">Master Objects</div>
<div class="t" style="left:859.5px;top:335.68px;font-size:10.3px;letter-spacing:-0.134px;">Master View</div>
<div class="t" style="left:8px;top:559.96px;font-size:9.5px;letter-spacing:-0.212px;">Slide 1 of 1</div>
<div class="t" style="left:329px;top:559.96px;font-size:9.5px;letter-spacing:0.127px;">Default</div>
<div class="t" style="left:501.3px;top:559.96px;font-size:9.5px;letter-spacing:-0.149px;">11.61 / 5.14</div>
<div class="t" style="left:579.4px;top:559.96px;font-size:9.5px;letter-spacing:-0.183px;">0.00 x 0.00</div>
<div class="t" style="left:744px;top:559.96px;font-size:9.5px;letter-spacing:-0.282px;">English (USA)</div>
<div class="t" style="left:996px;top:559.96px;font-size:9.5px;letter-spacing:-0.505px;">71%</div>
<div class="t" style="left:789.20px;top:156.68px;font-size:10.3px;letter-spacing:0.002px;">Format:</div>
<div class="t" style="left:770.50px;top:184.68px;font-size:10.3px;letter-spacing:0.080px;">Orientation:</div>
<div class="t" style="left:767.50px;top:212.68px;font-size:10.3px;letter-spacing:-0.057px;">Background:</div>
<div class="t" style="left:767.50px;top:267.68px;font-size:10.3px;letter-spacing:-0.223px;">Master Slide:</div>
</div>
</body></html>
